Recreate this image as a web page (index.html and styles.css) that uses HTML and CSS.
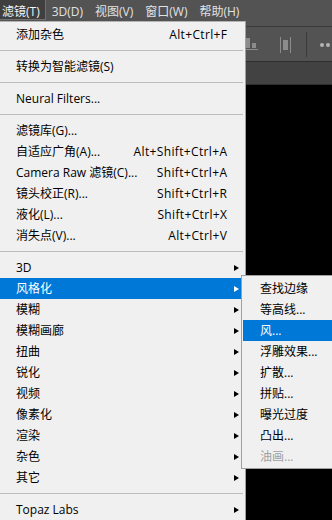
FILE: index.html
```html
<!DOCTYPE html>
<html lang="zh-CN">
<head>
<meta charset="utf-8">
<title>滤镜菜单</title>
<link rel="stylesheet" href="styles.css">
</head>
<body>
<div class="app">
  <div class="menubar">
    <span class="mb-item active">滤镜(T)</span>
    <span class="mb-item">3D(D)</span>
    <span class="mb-item">视图(V)</span>
    <span class="mb-item">窗口(W)</span>
    <span class="mb-item">帮助(H)</span>
  </div>
  <div class="optbar">
    <svg class="ic-bars" width="12" height="12" viewBox="0 0 12 12"><rect x="0" y="0" width="4" height="10" fill="#8c8c8c"/><rect x="6" y="5" width="4" height="5" fill="#8c8c8c"/><rect x="0" y="11" width="12" height="1" fill="#8c8c8c"/></svg>
    <svg class="ic-dist" width="11" height="16" viewBox="0 0 11 16"><rect x="0" y="0" width="1" height="16" fill="#8c8c8c"/><rect x="10" y="0" width="1" height="16" fill="#8c8c8c"/><rect x="3" y="3" width="5" height="10" fill="#8c8c8c"/></svg>
    <span class="vsep"></span>
    <svg class="ic-dots" width="12" height="6" viewBox="0 0 12 6"><circle cx="2" cy="3" r="2" fill="#b4b4b4"/><circle cx="8" cy="3" r="2" fill="#b4b4b4"/></svg>
  </div>
  <div class="tabbar"></div>
  <div class="canvas"></div>

  <div class="menu main">
    <div class="mi"><span class="lbl">添加杂色</span><span class="sc">Alt+Ctrl+F</span><span class="ar"></span></div>
    <div class="sep"></div>
    <div class="mi"><span class="lbl">转换为智能滤镜(S)</span><span class="sc"></span><span class="ar"></span></div>
    <div class="sep"></div>
    <div class="mi"><span class="lbl">Neural Filters...</span><span class="sc"></span><span class="ar"></span></div>
    <div class="sep"></div>
    <div class="mi"><span class="lbl">滤镜库(G)...</span><span class="sc"></span><span class="ar"></span></div>
    <div class="mi"><span class="lbl">自适应广角(A)...</span><span class="sc">Alt+Shift+Ctrl+A</span><span class="ar"></span></div>
    <div class="mi"><span class="lbl">Camera Raw 滤镜(C)...</span><span class="sc">Shift+Ctrl+A</span><span class="ar"></span></div>
    <div class="mi"><span class="lbl">镜头校正(R)...</span><span class="sc">Shift+Ctrl+R</span><span class="ar"></span></div>
    <div class="mi"><span class="lbl">液化(L)...</span><span class="sc">Shift+Ctrl+X</span><span class="ar"></span></div>
    <div class="mi"><span class="lbl">消失点(V)...</span><span class="sc">Alt+Ctrl+V</span><span class="ar"></span></div>
    <div class="sep"></div>
    <div class="mi"><span class="lbl">3D</span><span class="sc"></span><span class="ar on"></span></div>
    <div class="mi hl"><span class="lbl">风格化</span><span class="sc"></span><span class="ar on"></span></div>
    <div class="mi"><span class="lbl">模糊</span><span class="sc"></span><span class="ar on"></span></div>
    <div class="mi"><span class="lbl">模糊画廊</span><span class="sc"></span><span class="ar on"></span></div>
    <div class="mi"><span class="lbl">扭曲</span><span class="sc"></span><span class="ar on"></span></div>
    <div class="mi"><span class="lbl">锐化</span><span class="sc"></span><span class="ar on"></span></div>
    <div class="mi"><span class="lbl">视频</span><span class="sc"></span><span class="ar on"></span></div>
    <div class="mi"><span class="lbl">像素化</span><span class="sc"></span><span class="ar on"></span></div>
    <div class="mi"><span class="lbl">渲染</span><span class="sc"></span><span class="ar on"></span></div>
    <div class="mi"><span class="lbl">杂色</span><span class="sc"></span><span class="ar on"></span></div>
    <div class="mi"><span class="lbl">其它</span><span class="sc"></span><span class="ar on"></span></div>
    <div class="sep"></div>
    <div class="mi"><span class="lbl">Topaz Labs</span><span class="sc"></span><span class="ar on"></span></div>
  </div>

  <div class="menu sub">
    <div class="si">查找边缘</div>
    <div class="si">等高线...</div>
    <div class="si hl">风...</div>
    <div class="si">浮雕效果...</div>
    <div class="si">扩散...</div>
    <div class="si">拼贴...</div>
    <div class="si">曝光过度</div>
    <div class="si">凸出...</div>
    <div class="si dis">油画...</div>
  </div>
</div>
</body>
</html>
```

FILE: styles.css
```css
html, body {
  margin: 0;
  padding: 0;
}
body {
  width: 332px;
  height: 520px;
  overflow: hidden;
  background: #000;
  font-family: "Open Sans", "Noto Sans CJK SC", sans-serif;
  font-size: 12px;
}
.app {
  position: relative;
  width: 332px;
  height: 520px;
  overflow: hidden;
  display: flex;
  flex-direction: column;
}
.menubar {
  height: 26px;
  flex: none;
  background: #535353;
  border-bottom: 1px solid #3a3a3a;
  display: flex;
  align-items: flex-start;
  margin-left: -4px;
}
.mb-item {
  height: 20px;
  box-sizing: border-box;
  padding: 5px 6px 0 6px;
  line-height: 14px;
  color: #e2e2e2;
  white-space: nowrap;
}
.mb-item.active {
  background: #3f3f3f;
  border: 1px solid #707070;
  border-top: none;
  padding: 5px 5px 0 5px;
  color: #f4f4f4;
}
.optbar {
  height: 34px;
  flex: none;
  background: #535353;
  border-bottom: 1px solid #2e2e2e;
  display: flex;
  align-items: center;
  justify-content: flex-end;
}
.ic-bars { margin-top: -1px; }
.ic-dist { margin-left: 22px; margin-top: 1px; }
.vsep {
  width: 1px;
  height: 25px;
  background: #3a3a3a;
  margin-left: 15px;
}
.ic-dots { margin-left: 13px; margin-top: 1px; }
.tabbar {
  height: 22px;
  flex: none;
  background: #424242;
  border-bottom: 1px solid #2e2e2e;
}
.canvas {
  flex: 1;
  background: #000;
}

.menu {
  position: absolute;
  background: #f0f0f0;
  color: #000;
  box-sizing: border-box;
}
.main {
  left: 0;
  top: 21px;
  width: 246px;
  border-top: 1px solid #b4b4b4;
  border-right: 1px solid #a0a0a0;
  padding-top: 2px;
}
.mi {
  height: 21px;
  display: grid;
  grid-template-columns: 1fr auto 12px;
  align-items: center;
  padding: 0 6px 0 16px;
  line-height: 21px;
  white-space: nowrap;
}
.mi .sc {
  text-align: right;
  letter-spacing: 0.35px;
  margin-right: -0.35px;
}
.ar.on {
  justify-self: end;
  width: 0;
  height: 0;
  border-left: 5px solid #000;
  border-top: 3.5px solid transparent;
  border-bottom: 3.5px solid transparent;
}
.mi.hl {
  background: #0078d7;
  color: #fff;
}
.mi.hl .ar.on { border-left-color: #fff; }
.sep {
  height: 1px;
  background: #bdbdbd;
  margin: 5px 2px 5px 0;
}
.sub {
  left: 241px;
  top: 275px;
  width: 100px;
  border: 1px solid #a0a0a0;
  padding: 2px 0 1px 1px;
}
.si {
  height: 21px;
  line-height: 21px;
  padding-left: 17px;
  white-space: nowrap;
}
.si.hl {
  background: #0078d7;
  color: #fff;
}
.si.dis { color: #a0a0a0; }
```
